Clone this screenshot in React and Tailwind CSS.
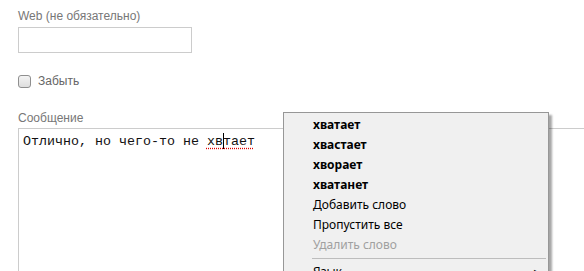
export default function App() {
  const suggestions = ["хватает", "хвастает", "хворает", "хватанет"];

  return (
    <div className="relative w-[584px] h-[271px] overflow-hidden bg-white font-['Liberation_Sans',Arial,sans-serif]">
      <div className="pl-[18px] pt-[9px] flex flex-col">
        <label className="text-[12px] leading-[15px] text-[#777]">Web (не обязательно)</label>
        <div className="mt-[3px] w-[174px] h-[26px] border border-[#ccc] bg-white" />

        <div className="mt-[21px] flex items-center gap-[7px] h-[15px]">
          <span className="w-[13px] h-[13px] rounded-[3px] border border-[#8f8f8f] bg-gradient-to-b from-[#f4f4f4] to-[#dedede]" />
          <span className="text-[12px] leading-[15px] text-[#666]">Забыть</span>
        </div>

        <label className="mt-[22px] text-[12px] leading-[15px] text-[#777]">Сообщение</label>
        <div className="mt-[2px] w-[700px] h-[160px] border border-[#ccc] bg-white px-[4px] pt-[5px]">
          <p className="font-['Liberation_Mono','Courier_New',monospace] text-[13.33px] leading-[15px] text-[#111] whitespace-pre">
            Отлично, но чего-то не{" "}
            <span className="relative underline decoration-dotted decoration-[#d00] underline-offset-[3px]">
              хв
              <span className="absolute top-[-1px] h-[16px] w-px bg-black" />
              тает
            </span>
          </p>
        </div>
      </div>

      <div className="absolute left-[283px] top-[112px] w-[266px] border border-[#979797] bg-[#f0f0f0] pt-[2px] pb-[3px] shadow-[3px_3px_2px_rgba(0,0,0,0.35)] font-['Noto_Sans',sans-serif] text-[12px]">
        {suggestions.map((s) => (
          <div key={s} className="h-[20px] flex items-center pl-[29px] font-bold text-black">
            {s}
          </div>
        ))}
        <div className="h-[20px] flex items-center pl-[29px] text-black">Добавить слово</div>
        <div className="h-[20px] flex items-center pl-[29px] text-black">Пропустить все</div>
        <div className="h-[20px] flex items-center pl-[29px] text-[#a0a0a0]">Удалить слово</div>
        <div className="mt-[3px] mb-[3px] ml-[28px] mr-[2px] h-px bg-[#bdbdbd]" />
        <div className="h-[20px] flex items-center justify-between pl-[29px] pr-[8px] text-black">
          <span>Язык</span>
          <span className="text-[8px]">▶</span>
        </div>
      </div>
    </div>
  );
}
